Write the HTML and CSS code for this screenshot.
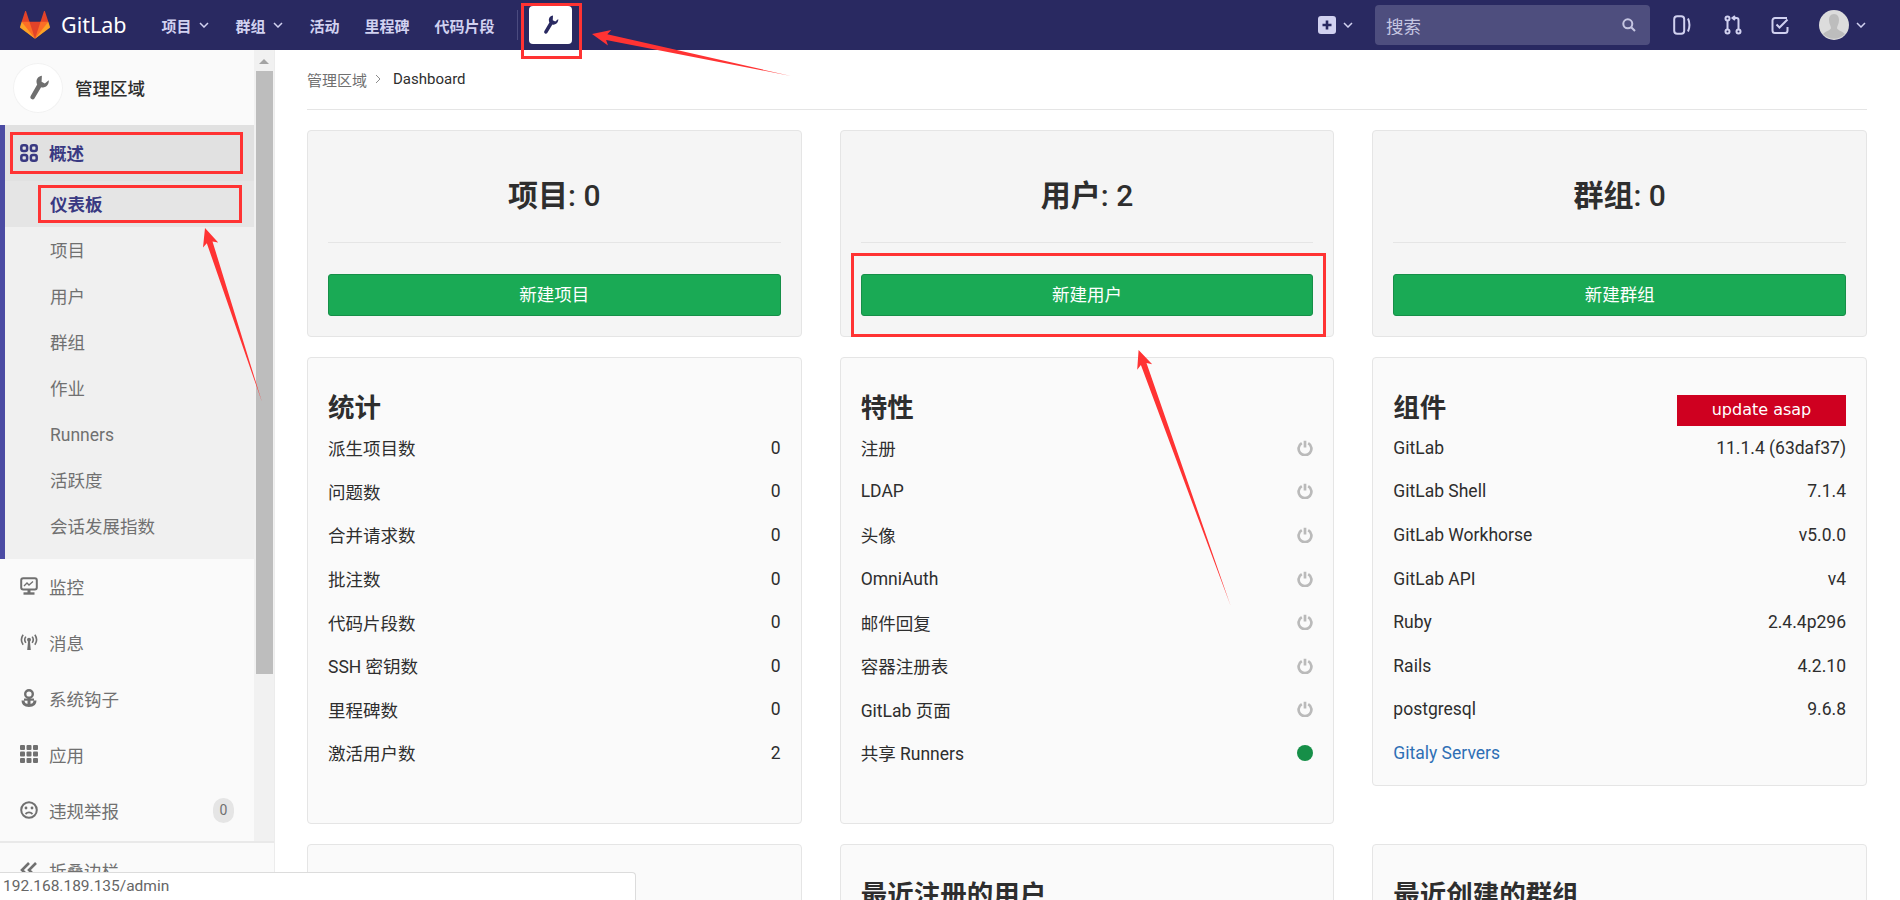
FILE: index.html
```html
<!DOCTYPE html>
<html>
<head>
	<title>Dashboard · 管理区域 · GitLab</title>
	<meta charset="UTF-8">
	<link rel="stylesheet" href="styles.css">
</head>
<body>
	<header class="navbar">
		<a class="brand">
			<svg class="tanuki" viewBox="0 0 36 36">
				<path fill="#e24329" d="M2 14l9.38 9v-9l-4-12.28c-.205-.632-1.176-.632-1.38 0z"/>
				<path fill="#e24329" d="M34 14l-9.38 9v-9l4-12.28c.205-.632 1.176-.632 1.38 0z"/>
				<path fill="#e24329" d="M18,34.38 3,14 33,14 Z"/>
				<path fill="#fc6d26" d="M18,34.38 11.38,14 2,14 6,25Z"/>
				<path fill="#fc6d26" d="M18,34.38 24.62,14 34,14 30,25Z"/>
				<path fill="#fca326" d="M2 14L.1 20.16c-.18.565 0 1.2.5 1.56l17.42 12.66z"/>
				<path fill="#fca326" d="M34 14l1.9 6.16c.18.565 0 1.2-.5 1.56L18 34.38z"/>
			</svg>
			<span>GitLab</span>
		</a>
		<nav class="nav-links">
			<a class="has-caret">项目<svg class="caret" viewBox="0 0 10 6"><path d="M1 1l4 4 4-4"/></svg></a>
			<a class="has-caret">群组<svg class="caret" viewBox="0 0 10 6"><path d="M1 1l4 4 4-4"/></svg></a>
			<a>活动</a>
			<a>里程碑</a>
			<a>代码片段</a>
		</nav>
		<span class="nav-divider"></span>
		<a class="admin-link">
			<svg viewBox="0 0 16 16"><path d="M10.4.4C8.400.6 6.900 2.300 7.100 4.400 7.150 5 7.300 5.500 7.500 5.900L3.400 13a1.400 1.400 0 0 0 2.400 1.400L9.900 7.500c.5.200 1.100.3 1.700.1 2-.5 3.300-2.400 3-4.400L12.200 5.200l-2-1z"/></svg>
		</a>

		<div class="nav-right">
			<a class="new-menu">
				<svg class="plus-icon" viewBox="0 0 18 18"><rect width="18" height="18" rx="3" fill="#d1d1f0"/><path d="M9 4.5v9M4.5 9h9" stroke="#292961" stroke-width="2.6"/></svg>
				<svg class="caret" viewBox="0 0 10 6"><path d="M1 1l4 4 4-4"/></svg>
			</a>
			<div class="search">
				<span>搜索</span>
				<svg viewBox="0 0 14 14"><circle cx="5.8" cy="5.8" r="4.5"/><path d="M9.2 9.2l3.8 3.8"/></svg>
			</div>
			<svg class="nav-icon issues" viewBox="0 0 18 20"><rect x="1.200" y="1.200" width="10" height="17.600" rx="3"/><path d="M15 3.500c1.800 4 1.800 9 0 13"/></svg>
			<svg class="nav-icon mrs" viewBox="0 0 18 20"><circle cx="3.5" cy="3.5" r="2"/><circle cx="3.5" cy="16.5" r="2"/><circle cx="14.5" cy="16.5" r="2"/><path d="M3.5 5.5v9M14.5 14.5V5c0-1.200-.8-2-2-2H9M11 1L8.500 3 11 5"/></svg>
			<svg class="nav-icon todos" viewBox="0 0 18 20"><path d="M16 3H4a2.500 2.500 0 0 0-2.500 2.500v10A2.500 2.500 0 0 0 4 18h10a2.500 2.500 0 0 0 2.500-2.500V12"/><path d="M5.500 9.500l3 3 8-8"/></svg>
			<a class="user-menu">
				<svg class="avatar" viewBox="0 0 30 30"><circle cx="15" cy="15" r="15" fill="#dcdcdc"/><path d="M15 4c-3.500 0-5 3-5 6 0 4 2 6 2 8 0 2-5 3-8 6a15 15 0 0 0 22 0c-3-3-8-4-8-6 0-2 2-4 2-8 0-3-1.500-6-5-6z" fill="#bdbdbd"/></svg>
				<svg class="caret" viewBox="0 0 10 6"><path d="M1 1l4 4 4-4"/></svg>
			</a>
		</div>
	</header>

	<div class="layout">
		<aside class="sidebar">
			<div class="sidebar-top">
				<div class="sidebar-list">
					<div class="context-header">
						<span class="context-avatar">
							<svg viewBox="0 0 16 16"><path d="M10.4.4C8.400.6 6.900 2.300 7.100 4.400 7.150 5 7.300 5.500 7.500 5.900L3.400 13a1.400 1.400 0 0 0 2.400 1.400L9.900 7.500c.5.200 1.100.3 1.700.1 2-.5 3.300-2.400 3-4.400L12.200 5.200l-2-1z"/></svg>
						</span>
						<strong>管理区域</strong>
					</div>
					<div class="active-section">
						<a class="section-title">
							<svg class="side-icon" viewBox="0 0 18 18"><rect x="1.300" y="1.300" width="5.800" height="5.800" rx="2"/><rect x="10.900" y="1.300" width="5.800" height="5.800" rx="2"/><rect x="1.300" y="10.900" width="5.800" height="5.800" rx="2"/><rect x="10.900" y="10.900" width="5.800" height="5.800" rx="2"/></svg>
							概述
						</a>
						<ul class="sub-list">
							<li class="current">仪表板</li>
							<li>项目</li>
							<li>用户</li>
							<li>群组</li>
							<li>作业</li>
							<li>Runners</li>
							<li>活跃度</li>
							<li>会话发展指数</li>
						</ul>
					</div>
					<a class="side-item">
						<svg class="side-icon" viewBox="0 0 18 18"><rect x="1.200" y="1.200" width="15.600" height="11.300" rx="2"/><path d="M4 9l3-3 2 2 4-3.500" stroke-width="1.300"/><path d="M3.500 16.500h11" stroke-width="2.400"/><path d="M9 12.500v4" stroke-width="3"/></svg>
						监控
					</a>
					<a class="side-item">
						<svg class="side-icon" viewBox="0 0 20 18"><circle class="solid" cx="10" cy="6.500" r="2.200"/><path class="solid" d="M9 8h2l1 10H8z"/><path d="M6.500 3a6 6 0 0 0 0 7M13.500 3a6 6 0 0 1 0 7M3.500 1a9.500 9.500 0 0 0 0 11M16.500 1a9.500 9.500 0 0 1 0 11" stroke-width="1.800"/></svg>
						消息
					</a>
					<a class="side-item">
						<svg class="side-icon" viewBox="0 0 18 18"><rect x="5.200" y="1.200" width="7.600" height="7.600" rx="3.800" stroke-width="2.400"/><rect class="solid" x="4" y="9.500" width="10" height="2.200"/><path d="M9 9v7.500" stroke-width="3"/><path d="M3 11.500c0 3.500 2.200 5 6 5s6-1.500 6-5" stroke-width="3"/></svg>
						系统钩子
					</a>
					<a class="side-item">
						<svg class="side-icon apps" viewBox="0 0 18 18"><rect width="5" height="5" rx="1"/><rect x="6.500" width="5" height="5" rx="1"/><rect x="13" width="5" height="5" rx="1"/><rect y="6.500" width="5" height="5" rx="1"/><rect x="6.500" y="6.500" width="5" height="5" rx="1"/><rect x="13" y="6.500" width="5" height="5" rx="1"/><rect y="13" width="5" height="5" rx="1"/><rect x="6.500" y="13" width="5" height="5" rx="1"/><rect x="13" y="13" width="5" height="5" rx="1"/></svg>
						应用
					</a>
					<a class="side-item">
						<svg class="side-icon" viewBox="0 0 18 18"><circle cx="9" cy="9" r="7.800"/><circle class="solid" cx="6" cy="7" r="1.400"/><circle class="solid" cx="12" cy="7" r="1.400"/><path d="M5.500 13c2-2 5-2 7 0" stroke-width="1.800"/></svg>
						违规举报
						<span class="badge">0</span>
					</a>
				</div>
				<div class="side-scrollbar">
					<span class="arrow-up"></span>
					<span class="thumb"></span>
				</div>
			</div>
			<a class="side-item collapse-row">
				<svg class="side-icon" viewBox="0 0 18 18"><path d="M9 2L2 9l7 7M16 2L9 9l7 7" stroke-width="2.600"/></svg>
				折叠边栏
			</a>
		</aside>

		<main class="content">
			<div class="breadcrumbs">
				<a>管理区域</a>
				<svg viewBox="0 0 6 10"><path d="M1 1l4 4-4 4"/></svg>
				<span>Dashboard</span>
			</div>

			<div class="wells">
				<section class="well well-stat">
					<h3>项目<span>: 0</span></h3>
					<hr>
					<a class="btn-new">新建项目</a>
				</section>
				<section class="well well-stat">
					<h3>用户<span>: 2</span></h3>
					<hr>
					<a class="btn-new">新建用户</a>
				</section>
				<section class="well well-stat">
					<h3>群组<span>: 0</span></h3>
					<hr>
					<a class="btn-new">新建群组</a>
				</section>

				<section class="well well-list tall">
					<h4>统计</h4>
					<div class="row"><span>派生项目数</span><span>0</span></div>
					<div class="row"><span>问题数</span><span>0</span></div>
					<div class="row"><span>合并请求数</span><span>0</span></div>
					<div class="row"><span>批注数</span><span>0</span></div>
					<div class="row"><span>代码片段数</span><span>0</span></div>
					<div class="row"><span>SSH 密钥数</span><span>0</span></div>
					<div class="row"><span>里程碑数</span><span>0</span></div>
					<div class="row"><span>激活用户数</span><span>2</span></div>
				</section>
				<section class="well well-list tall">
					<h4>特性</h4>
					<div class="row"><span>注册</span><svg class="power" viewBox="0 0 16 16"><path d="M4.800 3.200a6.400 6.400 0 1 0 6.400 0M8 .8v6.600"/></svg></div>
					<div class="row"><span>LDAP</span><svg class="power" viewBox="0 0 16 16"><path d="M4.800 3.200a6.400 6.400 0 1 0 6.400 0M8 .8v6.600"/></svg></div>
					<div class="row"><span>头像</span><svg class="power" viewBox="0 0 16 16"><path d="M4.800 3.200a6.400 6.400 0 1 0 6.400 0M8 .8v6.600"/></svg></div>
					<div class="row"><span>OmniAuth</span><svg class="power" viewBox="0 0 16 16"><path d="M4.800 3.200a6.400 6.400 0 1 0 6.400 0M8 .8v6.600"/></svg></div>
					<div class="row"><span>邮件回复</span><svg class="power" viewBox="0 0 16 16"><path d="M4.800 3.200a6.400 6.400 0 1 0 6.400 0M8 .8v6.600"/></svg></div>
					<div class="row"><span>容器注册表</span><svg class="power" viewBox="0 0 16 16"><path d="M4.800 3.200a6.400 6.400 0 1 0 6.400 0M8 .8v6.600"/></svg></div>
					<div class="row"><span>GitLab 页面</span><svg class="power" viewBox="0 0 16 16"><path d="M4.800 3.200a6.400 6.400 0 1 0 6.400 0M8 .8v6.600"/></svg></div>
					<div class="row"><span>共享 Runners</span><span class="dot-on"></span></div>
				</section>
				<section class="well well-list">
					<div class="title-row">
						<h4>组件</h4>
						<span class="update-badge">update asap</span>
					</div>
					<div class="row"><span>GitLab</span><span>11.1.4 (63daf37)</span></div>
					<div class="row"><span>GitLab Shell</span><span>7.1.4</span></div>
					<div class="row"><span>GitLab Workhorse</span><span>v5.0.0</span></div>
					<div class="row"><span>GitLab API</span><span>v4</span></div>
					<div class="row"><span>Ruby</span><span>2.4.4p296</span></div>
					<div class="row"><span>Rails</span><span>4.2.10</span></div>
					<div class="row"><span>postgresql</span><span>9.6.8</span></div>
					<div class="row"><a class="link">Gitaly Servers</a></div>
				</section>

				<section class="well well-list"><h4>最新项目</h4></section>
				<section class="well well-list"><h4>最近注册的用户</h4></section>
				<section class="well well-list"><h4>最近创建的群组</h4></section>
			</div>
		</main>
	</div>

	<div class="status-bar">192.168.189.135/admin</div>

	<!-- red marks drawn on top of the screenshot -->
	<span class="mark mark-admin"></span>
	<span class="mark mark-overview"></span>
	<span class="mark mark-dashboard"></span>
	<span class="mark mark-newuser"></span>
	<svg class="arrows" viewBox="0 0 1900 900">
		<polygon points="592,34 611.3,29.900 607.300,34.200 791,76 606.100,40 608,45.500"/>
		<polygon points="205,228 218.200,242.600 212.500,241.400 262,402 206.800,243.200 203,247.600"/>
		<polygon points="1138.600,350 1152.200,364.300 1146.500,363.100 1230.700,606 1140.900,365.100 1137.200,369.700"/>
	</svg>
</body>
</html>
```

FILE: styles.css
```css
html, body {
	margin: 0;
	padding: 0;
	height: 900px;
	overflow: hidden;
}
body {
	position: relative;
	font-family: Roboto, "Noto Sans CJK SC", sans-serif;
	font-size: 17.5px;
	color: #2e2e2e;
	background-color: #fff;
}

/* top bar */
.navbar {
	display: flex;
	align-items: center;
	height: 50px;
	background-color: #292961;
	color: #d1d1f0;
}
.brand {
	display: flex;
	align-items: center;
	margin-left: 20px;
	color: #fff;
	font-family: "Noto Sans", sans-serif;
	font-size: 21.500px;
	line-height: 30px;
}
.tanuki {
	width: 30px;
	height: 30px;
	margin-right: 11px;
}
.nav-links {
	display: flex;
	align-items: center;
	gap: 25px;
	margin-left: 35px;
	font-size: 15px;
	font-weight: 700;
}
.has-caret {
	display: flex;
	align-items: center;
	margin-right: 2px;
}
.caret {
	width: 10px;
	height: 6px;
	margin-left: 7px;
	fill: none;
	stroke: #d1d1f0;
	stroke-width: 1.5;
}
.nav-divider {
	width: 1px;
	height: 30px;
	margin: 0 11px 0 22px;
	background-color: #4b4b7f;
}
.admin-link {
	display: flex;
	align-items: center;
	justify-content: center;
	width: 43px;
	height: 38px;
	background-color: #fff;
	border-radius: 4px;
}
.admin-link svg {
	width: 20px;
	height: 20px;
	fill: #292961;
}
.nav-right {
	display: flex;
	align-items: center;
	margin-left: auto;
	padding-right: 34px;
}
.new-menu, .user-menu {
	display: flex;
	align-items: center;
}
.plus-icon {
	width: 18px;
	height: 18px;
}
.search {
	display: flex;
	align-items: center;
	justify-content: space-between;
	box-sizing: border-box;
	width: 275px;
	height: 40px;
	margin: 0 23px 0 22px;
	padding: 0 14px 0 11px;
	background-color: #4e4e7e;
	border-radius: 4px;
	color: #c6c6e2;
}
.search svg {
	width: 14px;
	height: 14px;
	fill: none;
	stroke: #c6c6e2;
	stroke-width: 2;
}
.nav-icon {
	width: 18px;
	height: 20px;
	fill: none;
	stroke: #d1d1f0;
	stroke-width: 2;
}
.mrs {
	margin-left: 33px;
}
.todos {
	margin: 0 30px 0 29px;
}
.avatar {
	width: 30px;
	height: 30px;
}

/* page */
.layout {
	display: flex;
	height: 850px;
}
.sidebar {
	display: flex;
	flex-direction: column;
	flex: none;
	width: 274px;
	background-color: #fafafa;
	border-right: 1px solid #ececec;
}
.sidebar-top {
	display: flex;
	height: 791px;
	border-bottom: 2px solid #e9e9e9;
}
.sidebar-list {
	width: 254px;
}
.context-header {
	display: flex;
	align-items: center;
	height: 75px;
	padding-left: 14px;
	box-sizing: border-box;
}
.context-header strong {
	margin-left: 13px;
	font-weight: 500;
}
.context-avatar {
	display: flex;
	align-items: center;
	justify-content: center;
	width: 48px;
	height: 48px;
	background-color: #fff;
	border-radius: 50%;
	box-shadow: 0 0 0 1px #f2f2f2;
}
.context-avatar svg {
	width: 26px;
	height: 26px;
	fill: #6f6f6f;
}
.active-section {
	height: 434px;
	border-left: 5px solid #4b4ba3;
	background-color: #f0f0f0;
	box-sizing: border-box;
}
.section-title {
	display: flex;
	align-items: center;
	box-sizing: border-box;
	height: 56px;
	padding: 0 0 1px 15px;
	background-color: #e1e1e1;
	color: #393982;
	font-weight: 700;
}
.section-title .side-icon {
	stroke: #393982;
	stroke-width: 2.500;
}
.sub-list {
	margin: 0;
	padding: 0;
	list-style: none;
}
.sub-list li {
	height: 46px;
	line-height: 48px;
	padding-left: 45px;
	color: #707070;
}
.sub-list li.current {
	background-color: #e5e5e5;
	color: #393982;
	font-weight: 700;
}
.side-item {
	display: flex;
	align-items: center;
	box-sizing: border-box;
	height: 56px;
	padding: 0 0 2px 20px;
	color: #707070;
}
.side-icon {
	flex: none;
	width: 18px;
	height: 18px;
	margin-right: 11px;
	fill: none;
	stroke: #707070;
	stroke-width: 2;
}
.side-icon .solid, .apps {
	fill: #707070;
	stroke: none;
}
.badge {
	display: flex;
	align-items: center;
	justify-content: center;
	width: 21px;
	height: 25px;
	margin: 0 20px 0 auto;
	background-color: #e5e5e5;
	border-radius: 12px;
	font-size: 14px;
}
.side-scrollbar {
	position: relative;
	width: 20px;
	background-color: #f1f1f1;
}
.arrow-up {
	position: absolute;
	top: 9px;
	left: 5px;
	border: 5px solid transparent;
	border-top: 0;
	border-bottom: 5px solid #a3a3a3;
}
.thumb {
	display: block;
	width: 17px;
	height: 603px;
	margin: 21px 0 0 2px;
	background-color: #bdbdbd;
}
.collapse-row {
	height: 56px;
}

.content {
	flex: 1;
	padding: 0 33px 0 32px;
}
.breadcrumbs {
	display: flex;
	align-items: center;
	box-sizing: border-box;
	height: 60px;
	padding-bottom: 1px;
	border-bottom: 1px solid #e5e5e5;
	font-size: 15px;
}
.breadcrumbs a {
	color: #707070;
}
.breadcrumbs svg {
	width: 6px;
	height: 10px;
	margin: 0 12px 0 8px;
	fill: none;
	stroke: #8c8c8c;
}
.wells {
	display: grid;
	grid-template-columns: repeat(3, 1fr);
	align-items: start;
	column-gap: 38px;
	row-gap: 20px;
	margin-top: 20px;
}
.well {
	border: 1px solid #e5e5e5;
	border-radius: 4px;
	padding: 0 20px;
}
.well-stat {
	background-color: #f5f5f5;
	text-align: center;
	padding-top: 46px;
	padding-bottom: 20px;
}
.well-stat h3 {
	margin: 0 0 27px;
	font-size: 30px;
	line-height: 38px;
	font-weight: 700;
}
.well-stat h3 span {
	font-weight: 500;
}
.well-stat hr {
	margin: 0 0 31px;
	border: 0;
	border-top: 1px solid #e5e5e5;
}
.btn-new {
	display: block;
	height: 42px;
	line-height: 40px;
	box-sizing: border-box;
	background-color: #1aaa55;
	border: 1px solid #168f48;
	border-radius: 3px;
	color: #fff;
}
.well-list {
	background-color: #fafafa;
	padding-top: 33px;
	padding-bottom: 10px;
}
.well-list.tall {
	padding-bottom: 48px;
}
.well-list h4 {
	margin: 0 0 1px;
	font-size: 26.500px;
	line-height: 34px;
	font-weight: 700;
}
.title-row {
	display: flex;
	justify-content: space-between;
	align-items: flex-start;
	height: 35px;
}
.update-badge {
	width: 169px;
	height: 31px;
	margin-top: 4px;
	background-color: #cf0020;
	color: #fff;
	font-family: "DejaVu Sans", sans-serif;
	font-size: 16px;
	line-height: 29px;
	text-align: center;
}
.row {
	display: flex;
	justify-content: space-between;
	align-items: center;
	height: 43.600px;
}
.power {
	width: 16px;
	height: 16px;
	fill: none;
	stroke: #bababa;
	stroke-width: 2.700;
}
.dot-on {
	width: 16px;
	height: 16px;
	background-color: #168f48;
	border-radius: 50%;
}
.link {
	color: #2f6fb5;
}

/* browser link preview */
.status-bar {
	position: absolute;
	left: 0;
	bottom: 0;
	width: 636px;
	height: 28px;
	box-sizing: border-box;
	padding-left: 3px;
	background-color: #fff;
	border-top: 1px solid #dcdcdc;
	border-right: 1px solid #dcdcdc;
	border-top-right-radius: 4px;
	color: #666;
	font-size: 15.500px;
	line-height: 27px;
}

/* annotations */
.mark {
	position: absolute;
	box-sizing: border-box;
	border: 3px solid #f33;
}
.mark-admin {
	left: 521px;
	top: 3px;
	width: 61px;
	height: 56px;
}
.mark-overview {
	left: 10px;
	top: 132px;
	width: 233px;
	height: 42px;
}
.mark-dashboard {
	left: 38px;
	top: 185px;
	width: 204px;
	height: 38px;
}
.mark-newuser {
	left: 851px;
	top: 253px;
	width: 475px;
	height: 84px;
}
.arrows {
	position: absolute;
	left: 0;
	top: 0;
	width: 1900px;
	height: 900px;
	fill: #f33;
	pointer-events: none;
}
```
